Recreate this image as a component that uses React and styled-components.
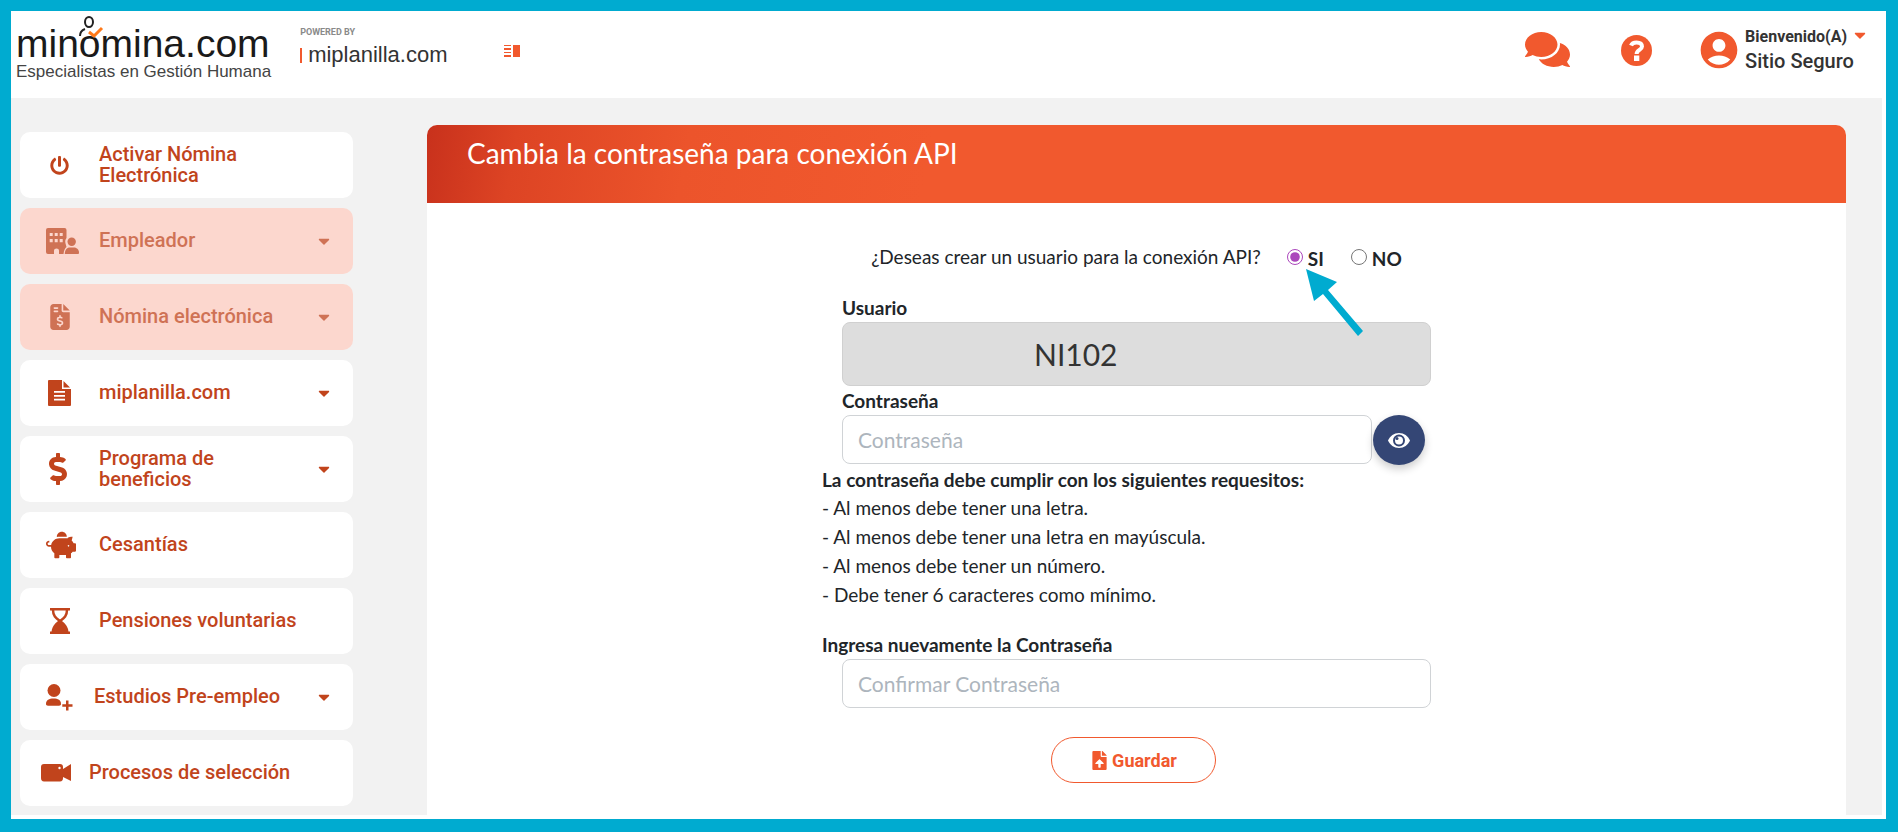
import { useState } from "react";
import styled, { createGlobalStyle, css } from "styled-components";
import {
  FaCaretDown,
  FaComments,
  FaDollarSign,
  FaFileUpload,
  FaPiggyBank,
  FaPowerOff,
} from "react-icons/fa";
import { FaFileInvoiceDollar } from "react-icons/fa6";
import { MdAccountCircle } from "react-icons/md";

const GlobalStyle = createGlobalStyle`
  * {
    box-sizing: border-box;
  }
  body {
    margin: 0;
    font-family: Lato, sans-serif;
    color: #212529;
  }
`;

const Frame = styled.div`
  display: flex;
  flex-direction: column;
  min-height: 100vh;
  border: solid #00abd0;
  border-width: 11px 12px 13px 11px;
  background: #fff;
`;

const Header = styled.header`
  display: flex;
  align-items: flex-start;
  min-height: 87px;
  padding: 0 17px 0 5px;
`;

const Brand = styled.a`
  position: relative;
  display: block;
  margin-top: 12px;
  color: #1a1a1a;
  font-family: "Liberation Sans", Arial, sans-serif;
  text-decoration: none;
`;

const BrandName = styled.span`
  display: block;
  font-size: 39px;
  line-height: 41px;
`;

const BrandTagline = styled.span`
  display: block;
  color: #444;
  font-size: 17px;
  line-height: 16px;
`;

const BrandFigure = styled.svg`
  position: absolute;
  left: 59px;
  top: -9px;
  width: 30px;
  height: 26px;
`;

const Powered = styled.div`
  display: flex;
  flex-direction: column;
  gap: 5px;
  margin: 15px 0 0 29px;
`;

const PoweredLabel = styled.span`
  color: #8a8a8a;
  font: 700 9px/12px Roboto, sans-serif;
`;

const PoweredName = styled.span`
  display: flex;
  align-items: center;
  gap: 6px;
  color: #333;
  font: 22px/24px "Liberation Sans", Arial, sans-serif;

  &::before {
    content: "";
    width: 2px;
    height: 15px;
    background: #f1592e;
  }
`;

const MenuToggle = styled.button`
  display: flex;
  margin: 34px 0 0 56px;
  padding: 0;
  border: 0;
  background: none;
`;

const HeaderActions = styled.div`
  display: flex;
  align-items: flex-start;
  margin-left: auto;
`;

const HeaderButton = styled.button`
  display: flex;
  margin: ${({ $top }) => $top}px ${({ $gap }) => $gap}px 0 0;
  padding: 0;
  border: 0;
  background: none;
  color: #f1592e;
`;

const UserMenu = styled.button`
  display: flex;
  align-items: flex-start;
  gap: 4px;
  margin-top: 15px;
  padding: 0;
  border: 0;
  background: none;
  color: #333;
  font-family: Roboto, sans-serif;
  text-align: left;

  > svg {
    margin-top: 2px;
    color: #f1592e;
  }
`;

const Welcome = styled.span`
  display: flex;
  gap: 4px;
  font-size: 16px;
  font-weight: 700;
  line-height: 22px;

  svg {
    color: #f1592e;
  }
`;

const UserName = styled.span`
  display: block;
  font-size: 20px;
  font-weight: 500;
  line-height: 26px;
`;

const Body = styled.div`
  display: flex;
  flex: 1;
  align-items: stretch;
  gap: 74px;
  margin: 0 4px 4px 0;
  padding: 27px 36px 0 9px;
  background: #f2f2f2;
`;

const Sidebar = styled.nav`
  display: flex;
  flex-direction: column;
  flex: 0 0 333px;
  gap: 10px;
  padding: 7px 0 9px;
`;

const MenuItem = styled.a`
  display: flex;
  align-items: center;
  height: 66px;
  padding: 0 20px 0 ${({ $left }) => $left || 26}px;
  border-radius: 10px;
  background: #fff;
  color: #c1441c;
  font: 500 20px/21px Roboto, sans-serif;
  text-decoration: none;

  ${({ $active }) =>
    $active &&
    css`
      background: #fcd7ce;
      color: #cf7255;
    `}
`;

const MenuIcon = styled.span`
  display: flex;
  flex: 0 0 ${({ $width }) => $width || 53}px;
`;

const MenuText = styled.span`
  flex: 1;
  max-width: 210px;
  padding-bottom: 1px;
`;

const MenuArrow = styled(FaCaretDown)`
  margin-left: auto;
`;

const Card = styled.main`
  flex: 1;
  border-radius: 10px 10px 0 0;
  background: #fff;
  overflow: hidden;
`;

const CardTitle = styled.h1`
  height: 78px;
  margin: 0;
  padding: 10px 40px;
  background: linear-gradient(100deg, #c8311c 0, #dd4424 90px, #ec542b 260px, #f1592e 500px);
  color: #fff;
  font-size: 28px;
  font-weight: 400;
  line-height: 36px;
`;

const Form = styled.form`
  display: flex;
  flex-direction: column;
  width: 629px;
  max-width: 100%;
  margin: 0 auto;
  padding: 39px 0 26px;
  font-size: 19px;
  line-height: 29px;
`;

const Question = styled.fieldset`
  display: flex;
  align-items: center;
  justify-content: center;
  margin: 0 0 22px;
  padding: 0;
  border: 0;
`;

const QuestionText = styled.span`
  margin-right: 26px;
`;

const RadioLabel = styled.label`
  display: flex;
  align-items: center;
  gap: 5px;
  margin-right: 27px;
  font-weight: 700;

  &:last-child {
    margin-right: 0;
  }
`;

const RadioText = styled.span`
  padding-top: 4px;
  line-height: 25px;
`;

const Radio = styled.input`
  width: 16px;
  height: 16px;
  margin: 0;
  accent-color: #ab47bc;
`;

const FieldLabel = styled.label`
  padding-left: ${({ $indent }) => ($indent ? 20 : 0)}px;
  font-weight: 700;
  line-height: 29px;
`;

const FieldRow = styled.div`
  display: flex;
  gap: 1px;
  padding: 0 20px;
`;

const TextField = styled.input`
  flex: 1;
  min-width: 0;
  height: 49px;
  padding: 0 15px;
  border: 1px solid #d0d3d6;
  border-radius: 8px;
  background: #fff;
  color: #333;
  font: 21px Lato, sans-serif;

  &::placeholder {
    color: #adb5bd;
    opacity: 1;
  }
`;

const UserField = styled(TextField)`
  height: 64px;
  padding-left: 191px;
  border-color: #d0d0d0;
  background: #ddd;
  font-size: 30px;
`;

const EyeButton = styled.button`
  display: flex;
  align-items: center;
  justify-content: center;
  width: 52px;
  height: 50px;
  margin-right: 6px;
  padding: 0;
  border: 0;
  border-radius: 50%;
  background: #344675;
  box-shadow: 0 4px 8px rgba(0, 0, 0, 0.2);
`;

const Rules = styled.section`
  margin: 1px 0 21px;
`;

const RulesTitle = styled.strong`
  display: block;
  line-height: 27px;
`;

const Rule = styled.p`
  margin: 0;
`;

const SaveButton = styled.button`
  display: flex;
  align-items: center;
  align-self: center;
  justify-content: center;
  gap: 3px;
  width: 165px;
  height: 46px;
  margin: 29px 6px 0 0;
  border: 1px solid #f1592e;
  border-radius: 23px;
  background: #fff;
  color: #f1592e;
  font: 700 18px Roboto, sans-serif;
`;

const Arrow = styled.svg`
  position: absolute;
  left: 1306px;
  top: 269px;
  width: 58px;
  height: 67px;
`;

const HelpIcon = () => (
  <svg width="31" height="31" viewBox="0 0 31 31">
    <circle cx="15.500" cy="15.500" r="15.500" fill="#f1592e" />
    <path
      d="M10 10.500C11 8 13 7.500 15.500 7.500c3.500 0 5.500 1.500 5.500 4 0 3.500-5.400 3.400-5.400 7.500"
      fill="none"
      stroke="#fff"
      strokeWidth="4"
    />
    <path d="M13 20.500h5.300v5.500H13z" fill="#fff" />
  </svg>
);

const BuildingUserIcon = () => (
  <svg width="34" height="26" viewBox="0 0 34 26" fill="currentColor">
    <path
      fillRule="evenodd"
      d="M2 0h16.500q2 0 2 2v8c-2.500 3-.5 6 0 9-1.500 1-2.500 3-3 7H13v-3.500q0-2-2.500-2T8 22.500V26H2q-2 0-2-2V2q0-2 2-2zM3.700 5v3h3V5zM8.700 5v3h3V5zM13.700 5v3h3V5zM3.700 11v3.200h3V11zM8.700 11v3.200h3V11zM13.700 11v3.200h3V11z"
    />
    <circle cx="25.700" cy="13.700" r="4.200" />
    <path d="M18.800 26c0-4 2-6.500 5-6.500h4.200c3 0 5 2.500 5 5 0 1-.4 1.500-1.400 1.500z" />
  </svg>
);

const FileIcon = () => (
  <svg width="23" height="26" viewBox="0 0 23 26" fill="currentColor">
    <path
      fillRule="evenodd"
      d="M1 0h13v9h9v16q0 1-1 1H1q-1 0-1-1V1q0-1 1-1zM6 11v1.800h11V11zM6 15v1.800h11V15zM6 18.800v1.800h11v-1.800z"
    />
    <path d="M15.500 1l6.500 6.500h-6.500z" />
  </svg>
);

const HourglassIcon = () => (
  <svg width="20" height="26" viewBox="0 0 20 26" fill="currentColor">
    <path d="M0 0h20v2.500H0zM0 23.500h20V26H0z" />
    <path d="M3 2c0 6 3 8 7 11 4-3 7-5 7-11" fill="none" stroke="currentColor" strokeWidth="2.500" />
    <path d="M10 11.500c4.500 3 8 6.500 8.500 12.500h-17c.5-6 4-9.500 8.500-12.500z" />
  </svg>
);

const UserPlusIcon = () => (
  <svg width="27" height="27" viewBox="0 0 27 27" fill="currentColor">
    <circle cx="8" cy="6.500" r="6.500" />
    <path d="M0 20c0-4 3-5.500 7.500-5.500S15 16 15 20c0 1.200-.8 1.700-2 1.700H2c-1.200 0-2-.5-2-1.700z" />
    <path d="M20 16.500h2.500v3.700h4v2.500h-4v3.800H20v-3.800h-3.700v-2.500H20z" />
  </svg>
);

const CameraIcon = () => (
  <svg width="30" height="18" viewBox="0 0 30 18">
    <path
      fill="currentColor"
      d="M3 0h16c2 0 3 1 3 3v2l8-5v17l-8-4v1c0 2-1 3.500-3 3.500H3c-2 0-3-1.500-3-3.500V3c0-2 1-3 3-3z"
    />
    <circle cx="18.500" cy="4" r="1.200" fill="#fff" />
  </svg>
);

const menu = [
  { text: "Activar Nómina Electrónica", icon: <FaPowerOff size={19} />, left: 30, width: 49 },
  { text: "Empleador", icon: <BuildingUserIcon />, active: true, arrow: true },
  { text: "Nómina electrónica", icon: <FaFileInvoiceDollar size={26} />, left: 27, width: 52, active: true, arrow: true },
  { text: "miplanilla.com", icon: <FileIcon />, left: 28, width: 51, arrow: true },
  { text: "Programa de beneficios", icon: <FaDollarSign size={32} />, left: 22, width: 57, arrow: true },
  { text: "Cesantías", icon: <FaPiggyBank size={30} /> },
  { text: "Pensiones voluntarias", icon: <HourglassIcon />, left: 30, width: 49 },
  { text: "Estudios Pre-empleo", icon: <UserPlusIcon />, width: 48, arrow: true },
  { text: "Procesos de selección", icon: <CameraIcon />, left: 21, width: 48 },
];

const rules = [
  "- Al menos debe tener una letra.",
  "- Al menos debe tener una letra en mayúscula.",
  "- Al menos debe tener un número.",
  "- Debe tener 6 caracteres como mínimo.",
];

const App = () => {
  const [createUser, setCreateUser] = useState("si");
  const [showPassword, setShowPassword] = useState(false);

  return (
    <Frame>
      <GlobalStyle />
      <Header>
        <Brand href="#">
          <BrandFigure viewBox="0 0 30 26" fill="none">
            <ellipse cx="14" cy="8" rx="4" ry="5" stroke="#222" strokeWidth="2" />
            <path d="M5 22c0-4 2-6 5-7" stroke="#222" strokeWidth="2" />
            <path d="M14 18l5 4 8-8" stroke="#ff7a1a" strokeWidth="3" />
          </BrandFigure>
          <BrandName>minomina.com</BrandName>
          <BrandTagline>Especialistas en Gestión Humana</BrandTagline>
        </Brand>
        <Powered>
          <PoweredLabel>POWERED BY</PoweredLabel>
          <PoweredName>miplanilla.com</PoweredName>
        </Powered>
        <MenuToggle aria-label="Menú">
          <svg width="16" height="12" viewBox="0 0 16 12" fill="#f1592e">
            <path d="M0 0h7v1H0zM0 3h7v2H0zM0 7h7v1H0zM0 10h7v2H0zM9 0h7v12H9z" />
          </svg>
        </MenuToggle>
        <HeaderActions>
          <HeaderButton $top={16} $gap={51} aria-label="Chat">
            <FaComments size={45} />
          </HeaderButton>
          <HeaderButton $top={24} $gap={45} aria-label="Ayuda">
            <HelpIcon />
          </HeaderButton>
          <UserMenu>
            <MdAccountCircle size={44} />
            <span>
              <Welcome>
                Bienvenido(A) <FaCaretDown size={18} />
              </Welcome>
              <UserName>Sitio Seguro</UserName>
            </span>
          </UserMenu>
        </HeaderActions>
      </Header>
      <Body>
        <Sidebar>
          {menu.map((item) => (
            <MenuItem key={item.text} href="#" $active={item.active} $left={item.left}>
              <MenuIcon $width={item.width}>{item.icon}</MenuIcon>
              <MenuText>{item.text}</MenuText>
              {item.arrow && <MenuArrow size={18} />}
            </MenuItem>
          ))}
        </Sidebar>
        <Card>
          <CardTitle>Cambia la contraseña para conexión API</CardTitle>
          <Form onSubmit={(e) => e.preventDefault()}>
            <Question>
              <QuestionText>¿Deseas crear un usuario para la conexión API?</QuestionText>
              <RadioLabel>
                <Radio
                  type="radio"
                  name="createUser"
                  checked={createUser === "si"}
                  onChange={() => setCreateUser("si")}
                />
                <RadioText>SI</RadioText>
              </RadioLabel>
              <RadioLabel>
                <Radio
                  type="radio"
                  name="createUser"
                  checked={createUser === "no"}
                  onChange={() => setCreateUser("no")}
                />
                <RadioText>NO</RadioText>
              </RadioLabel>
            </Question>
            <FieldLabel htmlFor="user" $indent>
              Usuario
            </FieldLabel>
            <FieldRow>
              <UserField id="user" value="NI102" readOnly />
            </FieldRow>
            <FieldLabel htmlFor="password" $indent>
              Contraseña
            </FieldLabel>
            <FieldRow>
              <TextField
                id="password"
                type={showPassword ? "text" : "password"}
                placeholder="Contraseña"
              />
              <EyeButton
                type="button"
                aria-label="Mostrar contraseña"
                onClick={() => setShowPassword(!showPassword)}
              >
                <svg width="22" height="15" viewBox="0 0 22 15">
                  <path fill="#fff" d="M11 0c5 0 9 3 11 7.500C20 12 16 15 11 15S2 12 0 7.500C2 3 6 0 11 0z" />
                  <circle cx="11" cy="7.500" r="5" fill="none" stroke="#344675" strokeWidth="2" />
                  <circle cx="9" cy="5.500" r="1.500" fill="#344675" />
                </svg>
              </EyeButton>
            </FieldRow>
            <Rules>
              <RulesTitle>La contraseña debe cumplir con los siguientes requesitos:</RulesTitle>
              {rules.map((rule) => (
                <Rule key={rule}>{rule}</Rule>
              ))}
            </Rules>
            <FieldLabel htmlFor="confirm">Ingresa nuevamente la Contraseña</FieldLabel>
            <FieldRow>
              <TextField id="confirm" type="password" placeholder="Confirmar Contraseña" />
            </FieldRow>
            <SaveButton type="submit">
              <FaFileUpload size={19} />
              Guardar
            </SaveButton>
          </Form>
        </Card>
      </Body>
      <Arrow viewBox="0 0 58 67" fill="#00abd0">
        <path d="M0 0l31 13-9 8 35 41-5 5-35-42-9 7z" />
      </Arrow>
    </Frame>
  );
};

export default App;
